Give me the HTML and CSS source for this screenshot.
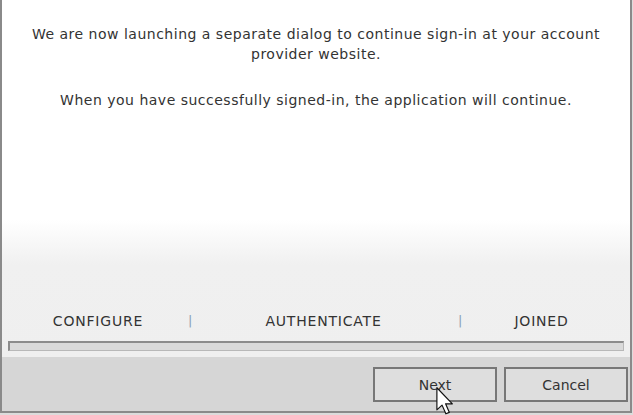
FILE: index.html
```html
<!DOCTYPE html>
<html lang="en">
<head>
    <meta charset="UTF-8">
    <title>Sign-in</title>
    <link rel="stylesheet" href="styles.css">
</head>
<body>
    <div class="window">
        <div class="content">
            <div class="message">
                <p>We are now launching a separate dialog to continue sign-in at your account<br>provider website.</p>
                <p>When you have successfully signed-in, the application will continue.</p>
            </div>
            <div class="steps">
                <span class="step">CONFIGURE</span>
                <span class="sep">|</span>
                <span class="step">AUTHENTICATE</span>
                <span class="sep">|</span>
                <span class="step">JOINED</span>
            </div>
            <div class="progress"></div>
        </div>
        <div class="footer">
            <button class="btn">Next</button>
            <button class="btn">Cancel</button>
        </div>
    </div>
    <svg class="cursor" width="18" height="28" viewBox="0 0 12 19">
        <path d="M0.5 0.5 L0.5 15.5 L4 12.3 L6.6 18.2 L8.9 17.2 L6.4 11.4 L11 11.4 Z" fill="#fff" stroke="#111" stroke-width="0.8" stroke-linejoin="round"/>
    </svg>
</body>
</html>
```

FILE: styles.css
```css
* {
    margin: 0;
    padding: 0;
    box-sizing: border-box;
}
body {
    font-family: "DejaVu Sans", "Liberation Sans", sans-serif;
    color: #333;
    background: #dcdcdc;
    width: 633px;
    height: 415px;
    position: relative;
    overflow: hidden;
}
.window {
    width: 632px;
    height: 413px;
    border: 2px solid #8a8a8a;
    border-top: none;
    display: flex;
    flex-direction: column;
}
.content {
    flex: 1;
    display: flex;
    flex-direction: column;
    background: linear-gradient(#fff 0, #fff 220px, #f0f0f0 265px, #efefef 100%);
    padding: 24px 6px 6px 6px;
}
.message {
    text-align: center;
    font-size: 14px;
    letter-spacing: 0.5px;
    line-height: 20px;
}
.message p + p {
    margin-top: 26px;
}
.steps {
    margin-top: auto;
    display: grid;
    grid-template-columns: 180px 1px 269px 1px 1fr;
    align-items: center;
    font-size: 14px;
    letter-spacing: 0.8px;
    line-height: 20px;
}
.step {
    text-align: center;
}
.sep {
    color: #8aa0b4;
    font-size: 13px;
    letter-spacing: 0;
}
.progress {
    margin-top: 10px;
    height: 10px;
    background: #dadada;
    border: 1px solid #b8b8b8;
    border-top: 2px solid #8c8c8c;
    border-left: 2px solid #8c8c8c;
}
.footer {
    height: 54px;
    background: #d6d6d6;
    display: flex;
    justify-content: flex-end;
    gap: 7px;
    padding: 10px 2px 0 0;
}
.btn {
    width: 124px;
    height: 35px;
    border: 2px solid #777;
    background: #dedede;
    font-family: "DejaVu Sans", "Liberation Sans", sans-serif;
    font-size: 14px;
    color: #333;
}
.cursor {
    position: absolute;
    left: 436px;
    top: 387px;
}
```
